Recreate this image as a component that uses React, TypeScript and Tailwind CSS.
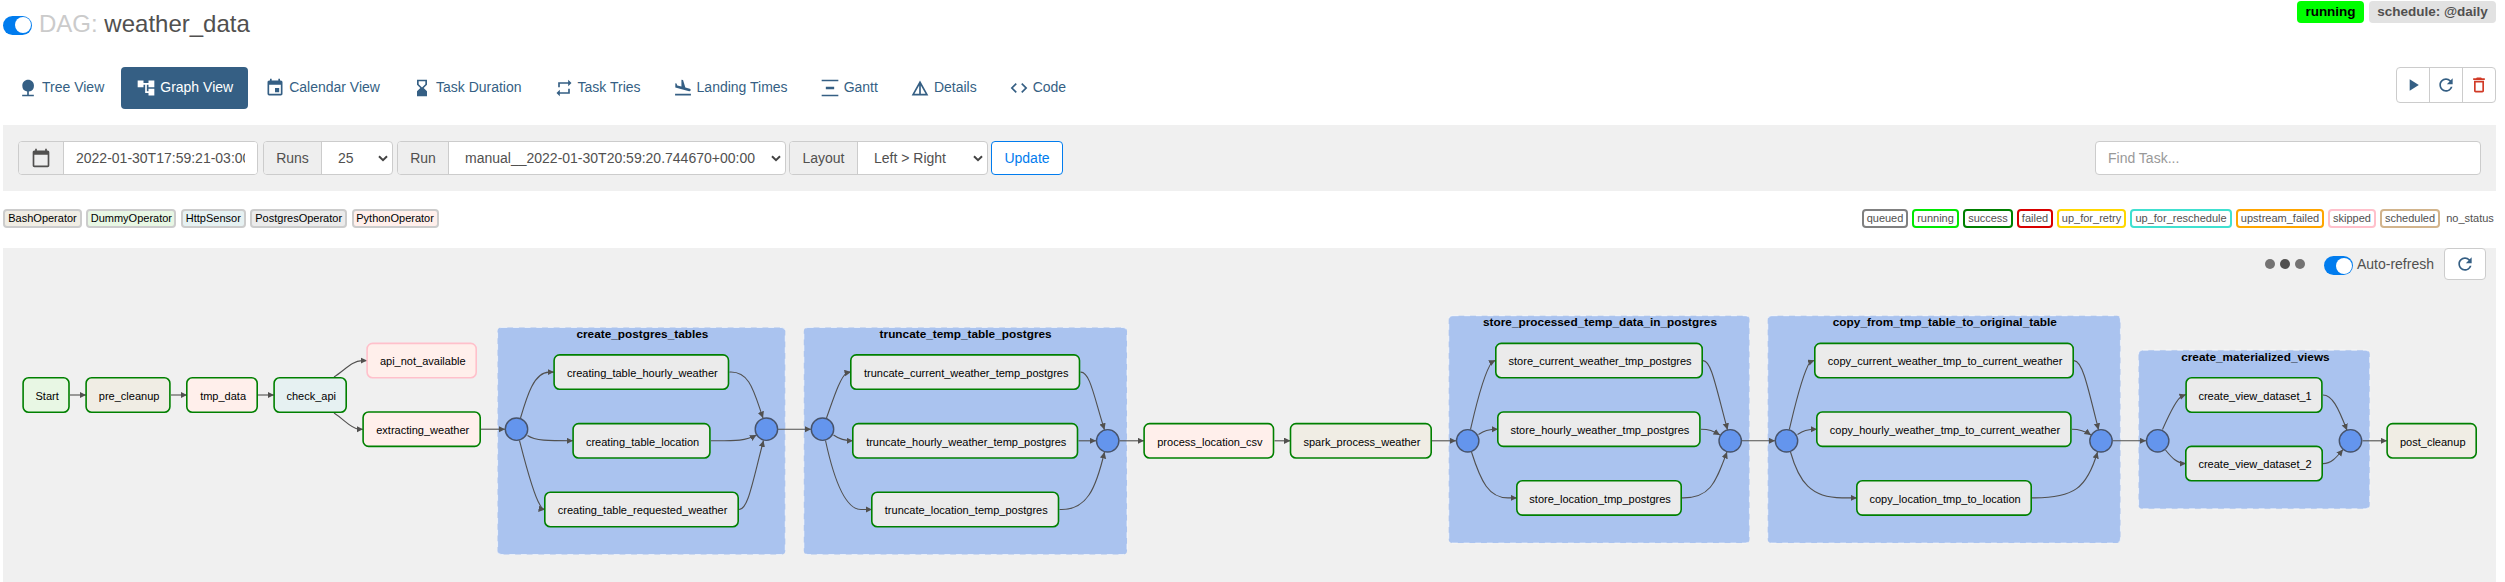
import React from "react";
import {
  MdAccountTree,
  MdCalendarToday,
  MdCode,
  MdDeleteOutline,
  MdDetails,
  MdEvent,
  MdFlightLand,
  MdHourglassBottom,
  MdNature,
  MdPlayArrow,
  MdRefresh,
  MdRepeat,
  MdVerticalDistribute,
} from "react-icons/md";

const TABS = [
  { label: "Tree View", Icon: MdNature },
  { label: "Graph View", Icon: MdAccountTree, active: true },
  { label: "Calendar View", Icon: MdEvent },
  { label: "Task Duration", Icon: MdHourglassBottom },
  { label: "Task Tries", Icon: MdRepeat },
  { label: "Landing Times", Icon: MdFlightLand },
  { label: "Gantt", Icon: MdVerticalDistribute },
  { label: "Details", Icon: MdDetails },
  { label: "Code", Icon: MdCode },
];

const OPERATORS = [
  ["BashOperator", "w-[79px] bg-[#f0ede4]"],
  ["DummyOperator", "w-[90px] bg-[#e8f7e4]"],
  ["HttpSensor", "w-[65px] bg-[#e6f1f2]"],
  ["PostgresOperator", "w-[97px] bg-[#ebebeb]"],
  ["PythonOperator", "w-[87px] bg-[#ffefeb]"],
];

const STATES = [
  ["queued", "w-[46px] border-[#808080]"],
  ["running", "w-[47px] border-[#01e801]"],
  ["success", "w-[50px] border-[#008000]"],
  ["failed", "w-[36px] border-[#d80000]"],
  ["up_for_retry", "w-[69px] border-[#ffd700]"],
  ["up_for_reschedule", "w-[102px] border-[#40e0d0]"],
  ["upstream_failed", "w-[88px] border-[#ffa500]"],
  ["skipped", "w-[48px] border-[#ffc0cb]"],
  ["scheduled", "w-[60px] border-[#d2b48c]"],
  ["no_status", "w-[52px] border-transparent"],
];

function Toggle() {
  return (
    <span className="flex h-[19px] w-[29px] shrink-0 items-center justify-end rounded-full bg-[#017cee] pr-px">
      <span className="size-4 rounded-full bg-white" />
    </span>
  );
}

function Chevron() {
  return (
    <svg className="mr-1 h-[7px] w-[10px] shrink-0" viewBox="0 0 10 7" fill="none">
      <path d="M1 1.2 5 5.2 9 1.2" stroke="#444" strokeWidth="2" />
    </svg>
  );
}

function Addon({ children, className }: { children: React.ReactNode; className: string }) {
  return (
    <span className={"flex items-center justify-center border-r border-[#ccc] bg-[#eee] " + className}>
      {children}
    </span>
  );
}

function Group({ children, className }: { children: React.ReactNode; className: string }) {
  return (
    <div className={"flex h-[34px] shrink-0 overflow-hidden rounded border border-[#ccc] bg-white " + className}>
      {children}
    </div>
  );
}

function Select({ value }: { value: string }) {
  return (
    <span className="flex flex-1 items-center justify-between pl-4">
      <span className="whitespace-nowrap">{value}</span>
      <Chevron />
    </span>
  );
}

/* Graph coordinates: the canvas origin is the panel's top left corner, offset by ORIGIN. */
const ORIGIN_X = 3;
const ORIGIN_Y = 248;

type Box = { label: string; x1: number; x2: number; cy: number; fill: string; stroke?: string };
const BASH = "#f0ede4";
const PY = "#ffefeb";
const PG = "#ebebeb";

const NODES: Box[] = [
  { label: "Start", x1: 22.3, x2: 69.8, cy: 395, fill: "#e8f7e4" },
  { label: "pre_cleanup", x1: 85.3, x2: 170.7, cy: 395, fill: BASH },
  { label: "tmp_data", x1: 186, x2: 258, cy: 395, fill: PY },
  { label: "check_api", x1: 273.3, x2: 347, cy: 395, fill: "#e6f1f2" },
  { label: "api_not_available", x1: 366.3, x2: 477, cy: 360.6, fill: PY, stroke: "#ffc0cb" },
  { label: "extracting_weather", x1: 362.3, x2: 481, cy: 429.2, fill: PY },
  { label: "creating_table_hourly_weather", x1: 553.3, x2: 729.3, cy: 372.1, fill: PG },
  { label: "creating_table_location", x1: 572.3, x2: 710.7, cy: 440.8, fill: PG },
  { label: "creating_table_requested_weather", x1: 544, x2: 739, cy: 509.5, fill: PG },
  { label: "truncate_current_weather_temp_postgres", x1: 850, x2: 1080.3, cy: 372.1, fill: PG },
  { label: "truncate_hourly_weather_temp_postgres", x1: 852, x2: 1078.3, cy: 440.8, fill: PG },
  { label: "truncate_location_temp_postgres", x1: 871, x2: 1059.3, cy: 509.5, fill: PG },
  { label: "process_location_csv", x1: 1143.3, x2: 1274.3, cy: 440.8, fill: PY },
  { label: "spark_process_weather", x1: 1289.7, x2: 1432, cy: 440.8, fill: BASH },
  { label: "store_current_weather_tmp_postgres", x1: 1495, x2: 1703, cy: 360.6, fill: PG },
  { label: "store_hourly_weather_tmp_postgres", x1: 1497, x2: 1700.7, cy: 429.2, fill: PG },
  { label: "store_location_tmp_postgres", x1: 1516, x2: 1682, cy: 497.9, fill: PG },
  { label: "copy_current_weather_tmp_to_current_weather", x1: 1814, x2: 2074, cy: 360.6, fill: PG },
  { label: "copy_hourly_weather_tmp_to_current_weather", x1: 1816, x2: 2071.7, cy: 429.2, fill: PG },
  { label: "copy_location_tmp_to_location", x1: 1856, x2: 2032, cy: 497.9, fill: PG },
  { label: "create_view_dataset_1", x1: 2185.3, x2: 2322.7, cy: 395, fill: PG },
  { label: "create_view_dataset_2", x1: 2185, x2: 2323, cy: 463.6, fill: PG },
  { label: "post_cleanup", x1: 2386.3, x2: 2477, cy: 440.8, fill: BASH },
];

const CLUSTERS = [
  { label: "create_postgres_tables", x1: 497, x2: 785.8, y1: 327, y2: 555, tx: 642.4, w: 132 },
  { label: "truncate_temp_table_postgres", x1: 803.3, x2: 1127.5, y1: 327, y2: 555, tx: 965.6, w: 172 },
  { label: "store_processed_temp_data_in_postgres", x1: 1448.2, x2: 1750, y1: 315.2, y2: 543.5, tx: 1600, w: 234 },
  { label: "copy_from_tmp_table_to_original_table", x1: 1767.2, x2: 2121, y1: 315.2, y2: 543.5, tx: 1944.8, w: 224 },
  { label: "create_materialized_views", x1: 2138, x2: 2370.2, y1: 349.7, y2: 509.3, tx: 2255.4, w: 148.5 },
];

const JOINS: [number, number][] = [
  [516.5, 429.2],
  [766.4, 429.2],
  [822.5, 429.2],
  [1107.7, 440.8],
  [1467.7, 440.8],
  [1730.2, 440.8],
  [1786.5, 440.8],
  [2101, 440.8],
  [2157.7, 440.8],
  [2350.5, 440.8],
];

const EDGES = [
  "M70 395H86",
  "M171 395H187",
  "M258 395H274",
  "M334 377C345 370 352 361 362 360.6H367",
  "M334 413C345 420 350 428 359 429.2H363",
  "M481 429.2H505",
  "M520.5 418C527 396 534 372.1 549 372.1H554",
  "M527.5 435.5C535 440.8 548 440.8 573 440.8",
  "M519.5 440.5C525 462 533 494 540 505Q542 509.2 545 509.5",
  "M729.5 372.1C750 371 754 392 763 418",
  "M711 440.8C735 440.8 745 441.2 756.5 435",
  "M739 509.5C748 509.5 752 484 763.5 440.5",
  "M778 429.2H811",
  "M826.5 418C833 400 840 377 847 372.6L851 371.9",
  "M833.5 435C839 439 845 440.8 853 440.8",
  "M825.5 440.5C831 466 842 509.5 861 509.5H872",
  "M1080.5 372.1C1090 371.5 1094 397 1104.5 429.8",
  "M1078.5 440.8H1096",
  "M1059.5 509.5C1087 511 1096 488 1104.5 452",
  "M1119.5 440.8H1144",
  "M1274.5 440.8H1290.5",
  "M1432 440.8H1456",
  "M1470.5 429.5C1475 410 1483 374 1492 362L1495.5 360.3",
  "M1478.5 434.5C1484 431 1488 429.2 1498 429.2",
  "M1471.5 452C1481 482 1489 497.9 1508 497.9H1517",
  "M1703 360.6C1711 360.6 1715 383 1727.5 429.8",
  "M1701 429.2C1709 429.2 1713 431 1720 435",
  "M1682 497.9C1711 498.5 1716 481 1727 452",
  "M1742 440.8H1775",
  "M1789.3 429.5C1794 410 1802 374 1810 362L1814.5 360.3",
  "M1797.5 434.5C1803 431 1807 429.2 1817 429.2",
  "M1790.5 452C1799 482 1811 497.9 1842 497.9H1857",
  "M2074 360.6C2082 360.6 2087 383 2098.5 429.8",
  "M2072 429.2C2080 429.2 2085 431 2091 435",
  "M2032 497.9C2074 498.5 2087 488 2097.5 452",
  "M2113 440.8H2146",
  "M2162.5 429.5C2168 417 2176 399 2182 396L2186 394.6",
  "M2165.5 450C2172 458 2177 463.6 2186 463.6",
  "M2323 395C2332 395 2338 407 2347 430.3",
  "M2323 463.6C2331 463.6 2336 458 2343 449.5",
  "M2362.5 440.8H2387",
];

function Graph() {
  return (
    <svg
      className="block h-[334px] w-[2493px]"
      viewBox={`${ORIGIN_X} ${ORIGIN_Y} 2493 334`}
      fontFamily="'Liberation Sans', Arial, sans-serif"
    >
      <defs>
        <marker id="arrow" markerWidth="7" markerHeight="7" refX="6.5" refY="3.2" orient="auto" markerUnits="userSpaceOnUse">
          <path d="M0 0 6.5 3.2 0 6.4Z" fill="#51504f" />
        </marker>
      </defs>
      {CLUSTERS.map((c) => (
        <g key={c.label}>
          <rect
            x={c.x1 + 0.5}
            y={c.y1 + 0.5}
            width={c.x2 - c.x1 - 1}
            height={c.y2 - c.y1 - 1}
            rx="4"
            fill="#6495ed"
            fillOpacity="0.5"
            stroke="#fff"
            strokeOpacity="0.55"
            strokeWidth="1.2"
            strokeDasharray="5.8 5.8"
          />
          <text
            x={c.tx}
            y={c.y1 + 11}
            textAnchor="middle"
            textLength={c.w}
            fontSize="11.8"
            fontWeight="700"
            fill="#000"
          >
            {c.label}
          </text>
        </g>
      ))}
      {EDGES.map((d) => (
        <path key={d} d={d} fill="none" stroke="#51504f" strokeWidth="1.1" markerEnd="url(#arrow)" />
      ))}
      {JOINS.map(([x, y]) => (
        <circle key={x} cx={x} cy={y} r="11.2" fill="#6495ed" stroke="#47536a" strokeWidth="1.4" />
      ))}
      {NODES.map((n) => (
        <g key={n.label}>
          <rect
            x={n.x1 + 0.8}
            y={n.cy - 17.2}
            width={n.x2 - n.x1 - 1.6}
            height="34.4"
            rx="5.5"
            fill={n.fill}
            stroke={n.stroke ?? "#008000"}
            strokeWidth="1.6"
          />
          <text x={(n.x1 + n.x2) / 2 + 1.1} y={n.cy + 4.8} textAnchor="middle" fontSize="11.03" fill="#000">
            {n.label}
          </text>
        </g>
      ))}
    </svg>
  );
}

export default function App() {
  return (
    <div className="h-[582px] w-[2505px] overflow-hidden bg-white pr-[9px] pl-[3px] font-['Liberation_Sans',Arial,sans-serif] text-sm text-[#51504f]">
      <header className="flex h-[67px] items-start justify-between">
        <div className="flex items-center pt-2.5">
          <Toggle />
          <h3 className="ml-[7px] pb-0.5 text-2xl leading-[28px]">
            <span className="text-[#cbcbcb]">DAG:</span> weather_data
          </h3>
        </div>
        <div className="flex gap-[5px] pt-px text-[13.5px] leading-[22px] font-bold">
          <span className="w-[67px] rounded bg-[#00ff00] text-center text-black">running</span>
          <span className="w-[127px] rounded bg-[#e2e2e2] text-center">schedule: @daily</span>
        </div>
      </header>

      <div className="flex h-[58px] items-start justify-between">
        <nav className="flex gap-0.5">
          {TABS.map(({ label, Icon, active }) => (
            <a
              key={label}
              className={
                "flex h-[42px] items-center gap-1 rounded px-[15px] whitespace-nowrap " +
                (active ? "bg-[#355f84] text-white" : "text-[#355f84]")
              }
            >
              <Icon className="size-5" />
              <span className="pb-0.5">{label}</span>
            </a>
          ))}
        </nav>
        <div className="flex h-9 w-[100px] divide-x divide-[#ccc] rounded border border-[#ccc] text-[#355f84]">
          <span className="flex flex-1 items-center justify-center">
            <MdPlayArrow className="size-5" />
          </span>
          <span className="flex flex-1 items-center justify-center">
            <MdRefresh className="size-5" />
          </span>
          <span className="flex flex-1 items-center justify-center text-[#d13a26]">
            <MdDeleteOutline className="size-5" />
          </span>
        </div>
      </div>

      <section className="flex h-[66px] items-center justify-between bg-[#f0f0f0] pr-[15px] pl-[15px]">
        <div className="flex items-center">
          <Group className="mr-[5px] w-[240px]">
            <Addon className="w-[45px]">
              <MdCalendarToday className="size-5" />
            </Addon>
            <input
              className="min-w-0 flex-1 bg-white px-3 outline-none"
              readOnly
              defaultValue="2022-01-30T17:59:21-03:00"
            />
          </Group>
          <Group className="mr-1 w-[130px]">
            <Addon className="w-[58px]">Runs</Addon>
            <Select value="25" />
          </Group>
          <Group className="mr-[3px] w-[389px]">
            <Addon className="w-[51px]">Run</Addon>
            <Select value="manual__2022-01-30T20:59:20.744670+00:00" />
          </Group>
          <Group className="mr-[3px] w-[199px]">
            <Addon className="w-[68px]">Layout</Addon>
            <Select value="Left > Right" />
          </Group>
          <button className="h-[34px] w-[72px] rounded border border-[#017cee] bg-white text-[#017cee]">
            Update
          </button>
        </div>
        <input
          className="h-[34px] w-[386px] rounded border border-[#ccc] bg-white px-3 outline-none placeholder:text-[#999]"
          placeholder="Find Task..."
        />
      </section>

      <div className="flex h-[57px] items-start justify-between pt-[18px] text-[11px] leading-[15px]">
        <div className="flex gap-[4.4px] text-black">
          {OPERATORS.map(([label, cls]) => (
            <span key={label} className={"flex h-[19px] justify-center rounded border-2 border-[#ccc] " + cls}>
              {label}
            </span>
          ))}
        </div>
        <div className="flex gap-[4px]">
          {STATES.map(([label, cls]) => (
            <span key={label} className={"flex h-[19px] justify-center rounded border-2 whitespace-nowrap " + cls}>
              {label}
            </span>
          ))}
        </div>
      </div>

      <main className="relative h-[334px] bg-[#f0f0f0]">
        <Graph />
        <div className="absolute top-0 right-2.5 flex items-start">
          <div className="mt-[11px] mr-[19px] flex gap-[5px]">
            <span className="size-2.5 rounded-full bg-[#747373]" />
            <span className="size-2.5 rounded-full bg-[#51504f]" />
            <span className="size-2.5 rounded-full bg-[#747373]" />
          </div>
          <div className="mt-2 mr-[10px] flex gap-[4px]">
            <Toggle />
            <span className="leading-[17px]">Auto-refresh</span>
          </div>
          <span className="flex h-8 w-[42px] items-center justify-center rounded-sm border border-[#ccc] bg-white text-[#355f84]">
            <MdRefresh className="size-5" />
          </span>
        </div>
      </main>
    </div>
  );
}
